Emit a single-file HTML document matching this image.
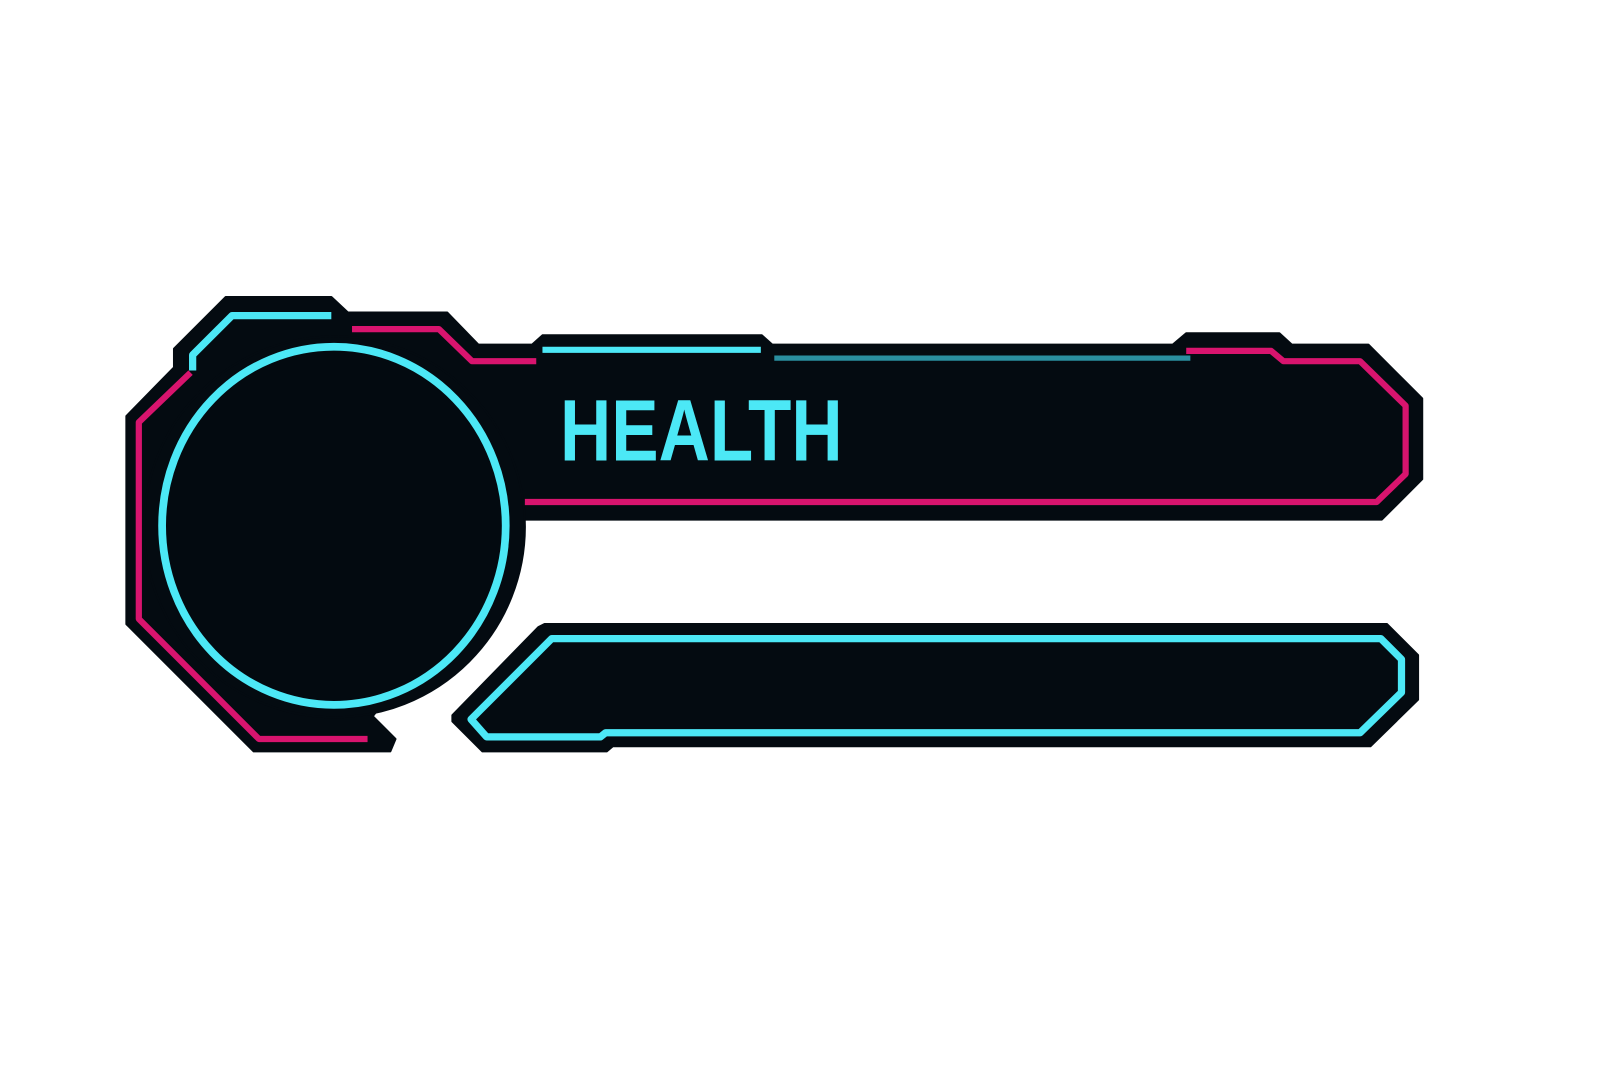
<!DOCTYPE html>
<html><head><style>html,body{margin:0;padding:0;background:#fff;width:1620px;height:1080px;overflow:hidden}</style></head>
<body>
<svg width="1620" height="1080" viewBox="0 0 1565 1043.5" xmlns="http://www.w3.org/2000/svg">
<g fill="#040b11" stroke="#040b11" stroke-width="2" stroke-linejoin="round">
<polygon points="218,287 320,287 336,302 432,302 462,333 514,333 524,324 736,324 746,333 1133,333 1146,322 1236,322 1248,333 1322,333 1374,385 1374,463 1335,502 490,502 400,640 360,692 382,714 377,726 245,726 122,603 122,402 168,355 168,337"/>
<ellipse cx="323" cy="509" rx="184" ry="184"/>
<polygon points="526,603 1340,603 1370,633 1370,676 1324,721 592,721 586,726 466,726 437,697 437,691 520,606"/>
</g>
<g fill="none" stroke-linejoin="round">
<ellipse cx="322.5" cy="508" rx="166" ry="173" stroke="#4ce8f6" stroke-width="7.5" fill="#030a10"/>
<polyline points="186,358 186,343 224,305 320,305" stroke="#4ce8f6" stroke-width="7"/>
<polyline points="184,360 134,408 134,598 250,714 355,714" stroke="#d8146e" stroke-width="6"/>
<polyline points="340,318 424,318 456,349 518,349" stroke="#d8146e" stroke-width="6"/>
<polyline points="524,338 735,338" stroke="#4ce8f6" stroke-width="6"/>
<polyline points="748,346 1150,346" stroke="#2a8fa0" stroke-width="5"/>
<polyline points="1146,339 1228,339 1240,349 1314,349 1358,392 1358,458 1330,485 507,485" stroke="#d8146e" stroke-width="6"/>
<polygon points="455,695 533,617 1334,617 1354,637 1354,669 1314,708 585,708 580,712 470,712" stroke="#4ce8f6" stroke-width="7"/>
</g>
<text x="541" y="445" fill="#4ce8f6" font-family="Liberation Sans, sans-serif" font-weight="bold" font-size="84" textLength="273" lengthAdjust="spacingAndGlyphs">HEALTH</text>
</svg>
</body></html>
